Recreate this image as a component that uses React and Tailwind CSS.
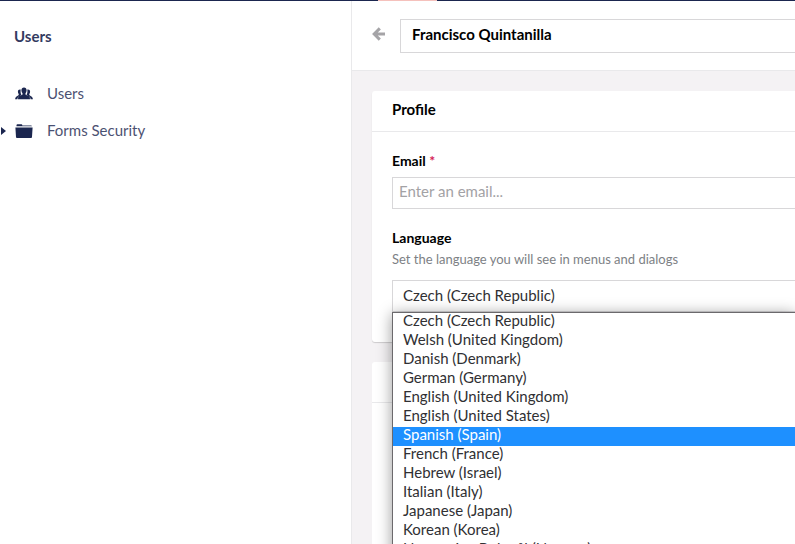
import { useState } from "react";

const languages = [
  "Czech (Czech Republic)",
  "Welsh (United Kingdom)",
  "Danish (Denmark)",
  "German (Germany)",
  "English (United Kingdom)",
  "English (United States)",
  "Spanish (Spain)",
  "French (France)",
  "Hebrew (Israel)",
  "Italian (Italy)",
  "Japanese (Japan)",
  "Korean (Korea)",
  "Norwegian Bokmål (Norway)",
];

function UsersIcon() {
  return (
    <svg viewBox="0 0 18 13" className="w-[18px] h-[13px] shrink-0" fill="currentColor">
      <path d="M9 .5c1.600 0 2.600 1.100 2.600 2.800 0 1.300-.4 2.300-1.100 3v1.200c.3.600 4 1.200 4.300 2.800l.2 1.900H3l.2-1.900c.3-1.600 4-2.200 4.300-2.800V6.300c-.7-.7-1.100-1.700-1.100-3C6.400 1.600 7.400.5 9 .5z" />
      <path d="M5.700 2.600c-1.700-.4-2.800.5-2.800 2.100 0 1 .3 1.700.8 2.200v1.200C3.400 9 .6 9.400.3 11.200L.1 12.200h2.300c.1-2.500 2.300-3 4.100-4.100-.9-1.300-1.100-3.400-.8-5.500z" />
      <path d="M12.300 2.600c1.700-.4 2.800.5 2.800 2.100 0 1-.3 1.700-.8 2.200v1.200c.3.900 3.100 1.300 3.400 3.100l.2 1h-2.300c-.1-2.500-2.300-3-4.100-4.100.9-1.300 1.100-3.400.8-5.500z" />
    </svg>
  );
}

function FolderIcon() {
  return (
    <svg viewBox="0 0 18 14" className="w-[18px] h-[14px] shrink-0" fill="currentColor">
      <path d="M1.500 2.300V1.200C1.500.6 1.900.3 2.400.3h4c.6 0 .9.300.9.900v.3h8.800c.5 0 .8.300.8.800H1.500z" />
      <path d="M.4 3.600h17.200L17 13c0 .6-.4.900-.9.900H1.900c-.5 0-.9-.3-.9-.9z" />
    </svg>
  );
}

function BackIcon() {
  return (
    <svg viewBox="0 0 13 14" className="w-[13px] h-[14px]" fill="none" stroke="currentColor" strokeWidth="3">
      <path d="M7.800 1.400 2.200 7l5.600 5.600M2.500 7H13" />
    </svg>
  );
}

function Sidebar() {
  return (
    <aside className="w-[352px] shrink-0 border-r border-[#e9e9eb] bg-white text-[#1b264f]">
      <h1 className="px-3.5 pt-[25px] text-[15px] leading-5 font-bold opacity-90">Users</h1>
      <nav className="mt-[29px]">
        <a href="#users" className="flex h-[37px] items-center pl-[15px]">
          <UsersIcon />
          <span className="ml-3.5 text-[15px] opacity-80">Users</span>
        </a>
        <a href="#forms-security" className="flex h-[37px] items-center pl-px">
          <svg viewBox="0 0 5 8" className="w-[5px] h-2 mr-[9px]" fill="currentColor">
            <path d="M0 0l5 4-5 4z" />
          </svg>
          <FolderIcon />
          <span className="ml-3.5 text-[15px] opacity-80">Forms Security</span>
        </a>
      </nav>
    </aside>
  );
}

export default function App() {
  const [name, setName] = useState("Francisco Quintanilla");
  const [email, setEmail] = useState("");
  const [language, setLanguage] = useState(languages[0]);
  const [active, setActive] = useState("Spanish (Spain)");

  return (
    <div className="flex h-screen flex-col overflow-hidden font-['Lato','Open_Sans',sans-serif] text-[15px] text-black">
      <div className="h-px shrink-0 bg-[#1b264f]">
        <div className="ml-[378px] h-px w-[59px] bg-[#f5c1bc]" />
      </div>
      <div className="flex min-h-0 flex-1">
        <Sidebar />
        <main className="min-w-0 flex-1 bg-[#f4f2f4]">
          <header className="flex h-[70px] items-center border-b border-[#e9e9eb] bg-white pl-5">
            <button type="button" aria-label="Back" className="-mt-1 w-7 text-[#a5a4a7]">
              <BackIcon />
            </button>
            <input
              type="text"
              aria-label="Name"
              value={name}
              onChange={(e) => setName(e.target.value)}
              className="h-[34px] min-w-0 flex-1 border border-r-0 border-[#d8d7d9] px-[11px] pb-1 font-bold outline-none"
            />
          </header>

          <div className="flex flex-col gap-5 pt-5 pl-5">
            <section className="rounded-l-[3px] bg-white shadow-[0_1px_1px_rgba(0,0,0,0.16)]">
              <h2 className="flex h-[41px] items-center border-b border-[#e9e9eb] px-5 pb-1 font-bold">
                Profile
              </h2>
              <div className="pt-[19px] pb-[30px] pl-5">
                <label htmlFor="email" className="block h-[26px] text-[14px] leading-5 font-bold">
                  Email <span className="text-[#d42054]">*</span>
                </label>
                <input
                  id="email"
                  type="email"
                  placeholder="Enter an email..."
                  value={email}
                  onChange={(e) => setEmail(e.target.value)}
                  className="block h-8 w-full border border-r-0 border-[#d8d7d9] px-1.5 pb-1 outline-none placeholder:text-[#a3a2a5]"
                />
                <label htmlFor="language" className="mt-[19px] block text-[14px] leading-5 font-bold">
                  Language
                </label>
                <p className="h-8 pt-px text-[13px] leading-5 text-[#7d8185]">
                  Set the language you will see in menus and dialogs
                </p>
                <div className="relative">
                  <select
                    id="language"
                    value={language}
                    onChange={(e) => setLanguage(e.target.value)}
                    className="block h-8 w-full appearance-none border border-r-0 border-[#d8d7d9] bg-white px-2.5 pb-0.5 text-[#303033] outline-none"
                  >
                    {languages.map((item) => (
                      <option key={item}>{item}</option>
                    ))}
                  </select>
                  <ul
                    role="listbox"
                    aria-label="Language"
                    className="absolute top-full right-0 left-0 z-10 border border-r-0 border-[#6b696c] bg-white text-[#303033] shadow-[0_2px_14px_rgba(0,0,0,0.4)]"
                  >
                    {languages.map((item) => (
                      <li
                        key={item}
                        role="option"
                        aria-selected={item === active}
                        onMouseEnter={() => setActive(item)}
                        onClick={() => setLanguage(item)}
                        className={`h-[19px] px-2.5 leading-[15px] ${
                          item === active ? "bg-[#1e90ff] text-white" : ""
                        }`}
                      >
                        {item}
                      </li>
                    ))}
                  </ul>
                </div>
              </div>
            </section>

            <section className="h-96 rounded-l-[3px] bg-white">
              <div className="h-[41px] border-b border-[#e9e9eb]" />
            </section>
          </div>
        </main>
      </div>
    </div>
  );
}
